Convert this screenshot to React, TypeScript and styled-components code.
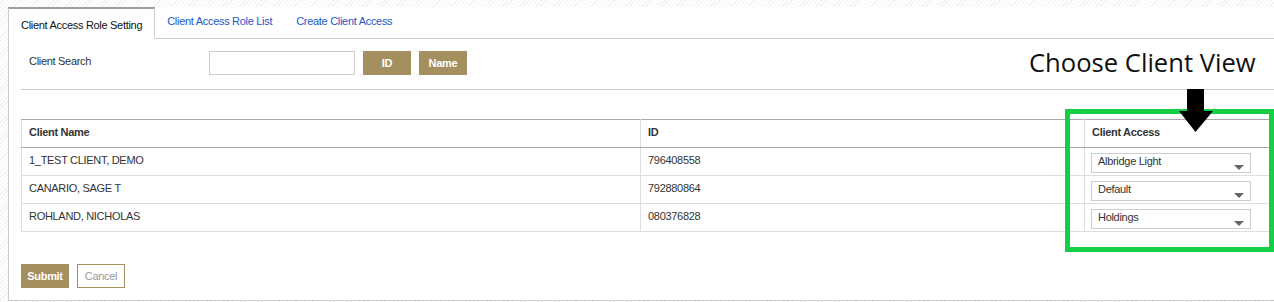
import React from "react";
import styled, { createGlobalStyle } from "styled-components";

const GlobalStyle = createGlobalStyle`
  html, body {
    margin: 0;
    padding: 0;
    width: 1274px;
    height: 302px;
    overflow: hidden;
    background: repeating-linear-gradient(135deg, #ffffff 0 2px, #f1f1f1 2px 3px);
    font-family: "Liberation Sans", Arial, sans-serif;
  }
  * { box-sizing: border-box; }
`;

const Root = styled.div`
  position: relative;
  padding: 7px 0 0 8px;
  width: 1274px;
  letter-spacing: -0.3px;
`;

const TabBar = styled.div`
  display: flex;
  align-items: stretch;
  height: 32px;
`;

const Tab = styled.div<{ $active?: boolean }>`
  display: flex;
  align-items: ${(p) => (p.$active ? "center" : "flex-start")};
  padding: ${(p) => (p.$active ? "3px 12px 0 12px" : "8px 12px 0 12px")};
  font-size: 11px;
  background: #fff;
  white-space: nowrap;
  color: ${(p) => (p.$active ? "#111" : "#2158c2")};
  border-top: ${(p) => (p.$active ? "2px solid #9e9e9e" : "none")};
  border-left: ${(p) => (p.$active ? "1px solid #ccc" : "none")};
  border-right: ${(p) => (p.$active ? "1px solid #ccc" : "none")};
  border-bottom: ${(p) => (p.$active ? "1px solid #fff" : "1px solid #ccc")};
`;

const TabFiller = styled.div`
  flex: 1;
  background: #fff;
  border-bottom: 1px solid #ccc;
`;

const Panel = styled.div`
  background: #fff;
  border-left: 1px solid #ccc;
  border-bottom: 1px solid #ccc;
  padding: 12px 0 12px 12px;
`;

const SearchRow = styled.div`
  display: flex;
  align-items: flex-start;
  height: 24px;
`;

const Label = styled.div`
  width: 188px;
  padding: 4px 0 0 8px;
  font-size: 11px;
  color: #333;
`;

const SearchInput = styled.input`
  width: 146px;
  height: 24px;
  border: 1px solid #ccc;
  margin: 0 8px 0 0;
  padding: 0 4px;
  font-size: 11px;
  outline: none;
`;

const GoldButton = styled.button<{ $outline?: boolean }>`
  width: 48px;
  height: 24px;
  margin: 0 8px 0 0;
  padding: 0;
  font-family: "Liberation Sans", Arial, sans-serif;
  font-size: 11px;
  letter-spacing: -0.3px;
  font-weight: ${(p) => (p.$outline ? "normal" : "bold")};
  color: ${(p) => (p.$outline ? "#999" : "#fff")};
  background: ${(p) => (p.$outline ? "#fff" : "#a48f5e")};
  border: 1px solid #a48f5e;
  cursor: pointer;
`;

const Divider = styled.div`
  margin-top: 14px;
  height: 1px;
  background: #ccc;
`;

const Table = styled.table`
  margin-top: 29px;
  width: 1249px;
  border-collapse: collapse;
  font-size: 11px;
  color: #333;
  table-layout: fixed;
`;

const Th = styled.th<{ $w: number }>`
  width: ${(p) => p.$w}px;
  height: 28px;
  text-align: left;
  font-weight: bold;
  padding: 0 7px 4px 7px;
  border-top: 1px solid #aaa;
  border-bottom: 1px solid #aaa;
  border-left: 1px solid #ddd;
  border-right: 1px solid #ddd;
`;

const Td = styled.td`
  height: 28px;
  padding: 0 7px 4px 7px;
  border: 1px solid #ddd;
  vertical-align: middle;
`;

const SelectCell = styled.td`
  height: 28px;
  padding: 4px 0 2px 6px;
  border: 1px solid #ddd;
`;

const SelectBox = styled.div`
  position: relative;
  width: 160px;
  height: 20px;
  border: 1px solid #ccc;
  font-size: 11px;
  color: #333;
  padding: 1px 0 0 6px;
`;

const Caret = styled.span`
  position: absolute;
  right: 6px;
  top: 11px;
  width: 0;
  height: 0;
  border-left: 5px solid transparent;
  border-right: 5px solid transparent;
  border-top: 5px solid #666;
`;

const Actions = styled.div`
  display: flex;
  margin-top: 32px;
`;

const Annotation = styled.div`
  position: absolute;
  left: 1065px;
  top: 109px;
  width: 209px;
  height: 143px;
  border: 5px solid #14cf45;
  pointer-events: none;
`;

const Callout = styled.div`
  position: absolute;
  left: 1029px;
  top: 45px;
  font-family: "Open Sans", "Noto Sans", sans-serif;
  font-size: 25.6px;
  letter-spacing: 0;
  color: #111;
  white-space: nowrap;
`;

const Arrow = styled.svg`
  position: absolute;
  left: 1179px;
  top: 89px;
`;

const rows = [
  { name: "1_TEST CLIENT, DEMO", id: "796408558", access: "Albridge Light" },
  { name: "CANARIO, SAGE T", id: "792880864", access: "Default" },
  { name: "ROHLAND, NICHOLAS", id: "080376828", access: "Holdings" },
];

export default function App() {
  return (
    <>
      <GlobalStyle />
      <Root>
        <TabBar>
          <Tab $active>Client Access Role Setting</Tab>
          <Tab>Client Access Role List</Tab>
          <Tab>Create Client Access</Tab>
          <TabFiller />
        </TabBar>
        <Panel>
          <SearchRow>
            <Label>Client Search</Label>
            <SearchInput />
            <GoldButton>ID</GoldButton>
            <GoldButton>Name</GoldButton>
          </SearchRow>
          <Divider />
          <Table>
            <thead>
              <tr>
                <Th $w={619}>Client Name</Th>
                <Th $w={444}>ID</Th>
                <Th $w={186}>Client Access</Th>
              </tr>
            </thead>
            <tbody>
              {rows.map((r) => (
                <tr key={r.id}>
                  <Td>{r.name}</Td>
                  <Td>{r.id}</Td>
                  <SelectCell>
                    <SelectBox>
                      {r.access}
                      <Caret />
                    </SelectBox>
                  </SelectCell>
                </tr>
              ))}
            </tbody>
          </Table>
          <Actions>
            <GoldButton>Submit</GoldButton>
            <GoldButton $outline>Cancel</GoldButton>
          </Actions>
        </Panel>
        <Callout>Choose Client View</Callout>
        <Annotation />
        <Arrow width="34" height="44" viewBox="0 0 34 44">
          <polygon points="8,0 25,0 25,22 34,22 16.5,43 0,22 8,22" fill="#000" />
        </Arrow>
      </Root>
    </>
  );
}
